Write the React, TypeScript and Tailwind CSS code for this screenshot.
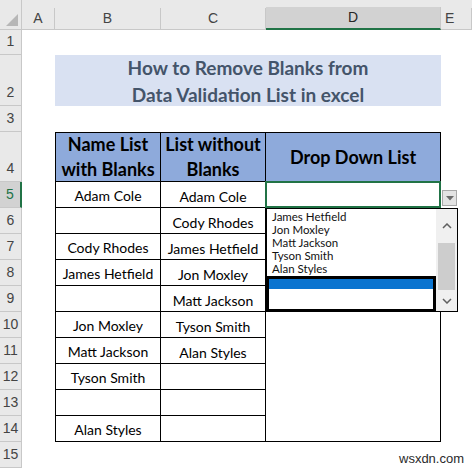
import React from 'react';

const colB = ['Adam Cole', '', 'Cody Rhodes', 'James Hetfield', '', 'Jon Moxley', 'Matt Jackson', 'Tyson Smith', '', 'Alan Styles'];
const colC = ['Adam Cole', 'Cody Rhodes', 'James Hetfield', 'Jon Moxley', 'Matt Jackson', 'Tyson Smith', 'Alan Styles', '', '', ''];
const listItems = ['James Hetfield', 'Jon Moxley', 'Matt Jackson', 'Tyson Smith', 'Alan Styles'];

const rowStarts = ['row-start-2', 'row-start-3', 'row-start-4', 'row-start-5', 'row-start-6', 'row-start-7', 'row-start-8', 'row-start-9', 'row-start-10', 'row-start-11', 'row-start-12', 'row-start-13', 'row-start-14', 'row-start-15', 'row-start-16'];

const font = "font-['Lato','Open_Sans',sans-serif]";

const App: React.FC = () => {
  return (
    <div className={`relative w-[472px] h-[468px] overflow-hidden bg-white ${font}`}>
      <div className="grid grid-cols-[22px_33px_106px_105px_175px_1fr] grid-rows-[30px_25px_51px_26px_50px_repeat(11,26px)]">
        {/* corner */}
        <div className="col-start-1 row-start-1 bg-[#e9e9e9] border-b border-r border-[#c8c8c8] flex items-end justify-end p-[3px]">
          <svg width="12" height="12" viewBox="0 0 12 12">
            <polygon points="12,0 12,12 0,12" fill="#b7b7b7" />
          </svg>
        </div>
        {['A', 'B', 'C', 'D', 'E'].map((l, i) => (
          <div key={l} className="row-start-1 bg-[#e9e9e9] flex flex-col">
            <div className="h-[9px]" />
            <div
              className={`flex-1 flex items-center justify-center text-[14px] border-r border-[#c8c8c8] font-['Liberation_Sans',sans-serif] ${
                l === 'D'
                  ? 'bg-[#d2d2d2] text-[#262626] border-b-2 border-b-[#217346]'
                  : 'text-[#444] border-b border-b-[#c8c8c8]'
              } ${i === 4 ? 'justify-start pl-1' : ''}`}
            >
              {l}
            </div>
          </div>
        ))}

        {/* row headers */}
        {Array.from({ length: 15 }, (_, i) => (
          <div
            key={i}
            className={`col-start-1 ${rowStarts[i]} flex items-end justify-center pb-[2px] text-[14px] font-['Liberation_Sans',sans-serif] border-b border-[#c8c8c8] ${
              i === 4
                ? 'bg-[#d2d2d2] text-[#217346] border-r-2 border-r-[#217346]'
                : 'bg-[#e9e9e9] text-[#444] border-r border-r-[#c8c8c8]'
            }`}
          >
            {i + 1}
          </div>
        ))}

        {/* title */}
        <div className="col-start-3 col-span-3 row-start-3 bg-[#d9e1f2] flex flex-col items-center justify-center text-[19px] leading-[27px] font-bold text-[#44546a]">
          <span>How to Remove Blanks from</span>
          <span>Data Validation List in excel</span>
        </div>

        {/* table header */}
        <div className="col-start-3 row-start-5 bg-[#8eaadb] border border-black flex flex-col items-center justify-center text-[18px] leading-[25px] font-bold text-black">
          <span>Name List</span>
          <span>with Blanks</span>
        </div>
        <div className="col-start-4 row-start-5 bg-[#8eaadb] border-y border-r border-black flex flex-col items-center justify-center text-[18px] leading-[25px] font-bold text-black">
          <span>List without</span>
          <span>Blanks</span>
        </div>
        <div className="col-start-5 row-start-5 bg-[#8eaadb] border-y border-r border-black flex items-center justify-center text-[18px] font-bold text-black">
          Drop Down List
        </div>

        {/* body */}
        {colB.map((v, i) => (
          <div key={`b${i}`} className={`col-start-3 ${rowStarts[i + 4]} border-x border-b border-black flex items-center justify-center pt-[1px] text-[14px] text-black`}>
            {v}
          </div>
        ))}
        {colC.map((v, i) => (
          <div key={`c${i}`} className={`col-start-4 ${rowStarts[i + 4]} border-r border-b border-black flex items-center justify-center pt-[4px] text-[14px] text-black`}>
            {v}
          </div>
        ))}
        <div className="col-start-5 row-start-6 row-span-10 border-r border-b border-black" />
        {/* selected cell */}
        <div className="col-start-5 row-start-6 border-2 border-[#217346] -mt-px -ml-px" />
      </div>

      {/* dropdown arrow */}
      <div className="absolute left-[442px] top-[190px] w-[15px] h-[16px] bg-[#e3e3e3] border border-[#a8a8a8] flex items-center justify-center">
        <svg width="8" height="5" viewBox="0 0 8 5">
          <polygon points="0,0 8,0 4,4.5" fill="#6b6b6b" />
        </svg>
      </div>

      {/* dropdown list */}
      <div className="absolute left-[266px] top-[208px] w-[192px] h-[104px] bg-white border border-black flex text-[11.5px] leading-[13px] text-[#111]">
        <div className="flex-1 flex flex-col">
          <div className="pl-[5px] pt-[1px] flex flex-col">
            {listItems.map((t) => (
              <span key={t}>{t}</span>
            ))}
          </div>
          <div className="mt-[1px] flex-1 border-[3px] border-black -ml-px -mb-px flex flex-col">
            <div className="h-[10px] bg-[#0a74d0]" />
          </div>
        </div>
        <div className="w-[21px] bg-[#f0f0f0] flex flex-col items-center">
          <div className="h-[34px] flex items-center justify-center">
            <svg width="10" height="6" viewBox="0 0 10 6">
              <polyline points="1,5 5,1 9,5" fill="none" stroke="#606060" strokeWidth="1.5" />
            </svg>
          </div>
          <div className="w-[17px] h-[47px] bg-[#cdcdcd]" />
          <div className="flex-1 flex items-center justify-center">
            <svg width="10" height="6" viewBox="0 0 10 6">
              <polyline points="1,1 5,5 9,1" fill="none" stroke="#606060" strokeWidth="1.5" />
            </svg>
          </div>
        </div>
      </div>

      {/* watermark */}
      <div className="absolute left-[399px] top-[449px] text-[13px] text-[#2a2a2a] font-['Liberation_Sans',sans-serif]">
        wsxdn.com
      </div>
    </div>
  );
};

export default App;
